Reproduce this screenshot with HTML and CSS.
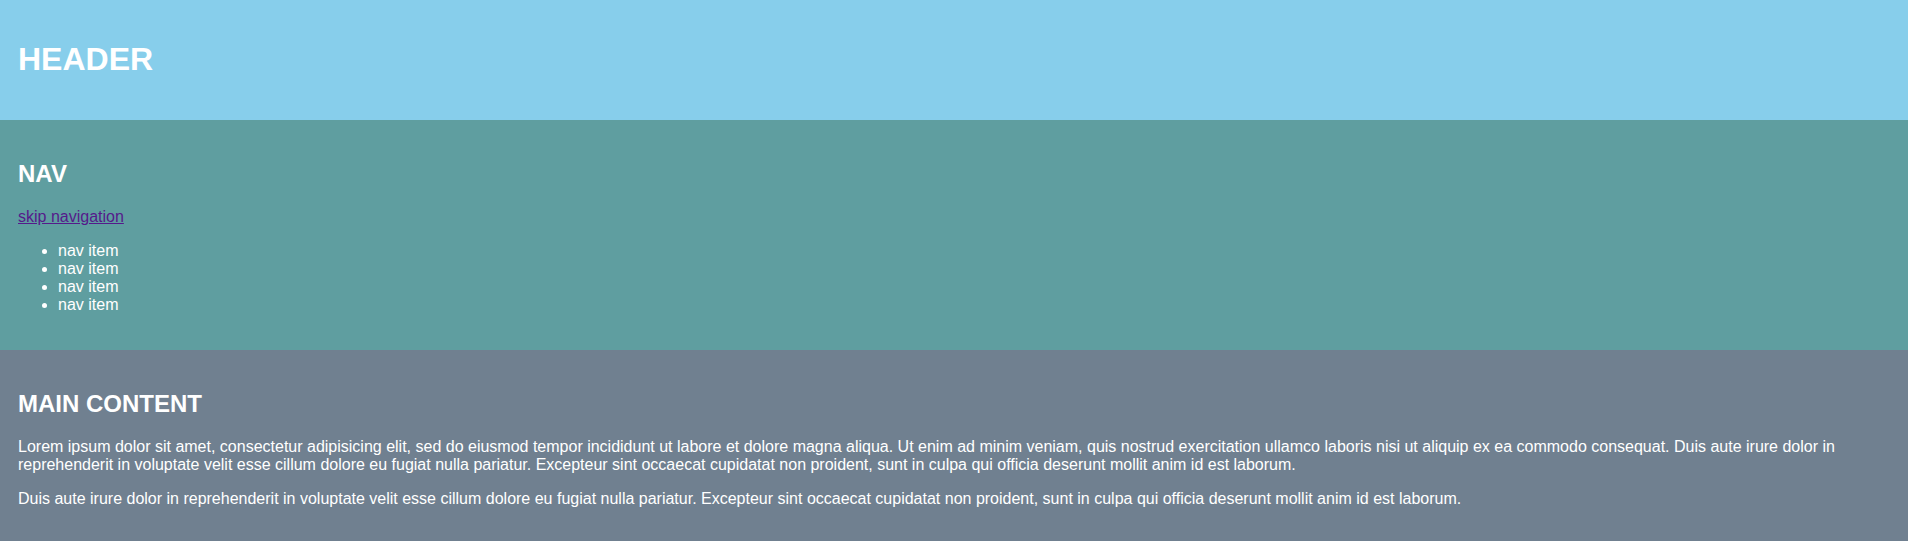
FILE: index.html
```html
<!DOCTYPE html>
<html lang="en">
<head>
<meta charset="utf-8">
<title>Layout</title>
<link rel="stylesheet" href="styles.css">
</head>
<body>
<header class="site-header">
  <h1 class="title">HEADER</h1>
</header>
<nav class="site-nav">
  <h2 class="section-title">NAV</h2>
  <p class="skip"><a href="#main" class="skip-link">skip navigation</a></p>
  <ul class="nav-list">
    <li>nav item</li>
    <li>nav item</li>
    <li>nav item</li>
    <li>nav item</li>
  </ul>
</nav>
<main id="main" class="site-main">
  <h2 class="section-title">MAIN CONTENT</h2>
  <p class="text">Lorem ipsum dolor sit amet, consectetur adipisicing elit, sed do eiusmod tempor incididunt ut labore et dolore magna aliqua. Ut enim ad minim veniam, quis nostrud exercitation ullamco laboris nisi ut aliquip ex ea commodo consequat. Duis aute irure dolor in reprehenderit in voluptate velit esse cillum dolore eu fugiat nulla pariatur. Excepteur sint occaecat cupidatat non proident, sunt in culpa qui officia deserunt mollit anim id est laborum.</p>
  <p class="text">Duis aute irure dolor in reprehenderit in voluptate velit esse cillum dolore eu fugiat nulla pariatur. Excepteur sint occaecat cupidatat non proident, sunt in culpa qui officia deserunt mollit anim id est laborum.</p>
</main>
</body>
</html>
```
FILE: styles.css
```css
html, body {
  margin: 0;
  padding: 0;
}
body {
  font-family: "Liberation Sans", Arial, sans-serif;
  font-size: 16px;
  color: #ffffff;
}
.site-header,
.site-nav,
.site-main {
  padding: 20px 18px;
}
.site-header {
  background: #87ceeb;
}
.site-nav {
  background: #5f9ea0;
}
.site-main {
  background: #708090;
}
.title {
  font-size: 32px;
  margin: 21.44px 0;
}
.section-title {
  font-size: 24px;
  margin: 19.92px 0;
}
.skip {
  margin: 16px 0;
}
.skip-link {
  color: #551a8b;
}
.nav-list {
  margin: 16px 0;
  padding-left: 40px;
}
.text {
  margin: 16px 0;
}
```
